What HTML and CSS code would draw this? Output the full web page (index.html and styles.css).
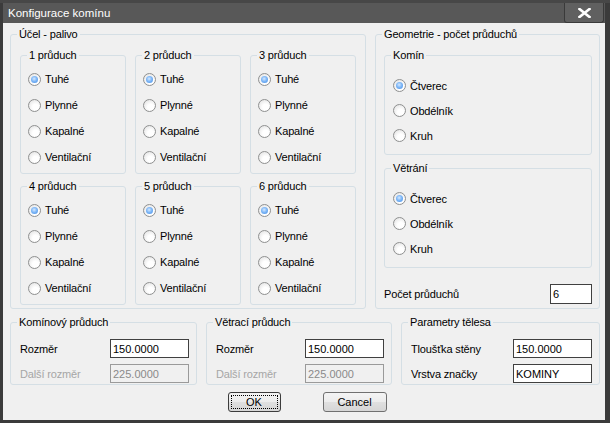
FILE: index.html
```html
<!DOCTYPE html>
<html lang="cs">
<head>
<meta charset="utf-8">
<title>Konfigurace komínu</title>
<link rel="stylesheet" href="styles.css">
</head>
<body>
<div class="window">
  <div class="titlebar">
    <span class="title">Konfigurace komínu</span>
    <button class="close" type="button" aria-label="Zavřít">
      <svg width="13" height="10" viewBox="0 0 13 10"><path d="M1.5 1 L11.5 9 M11.5 1 L1.5 9" stroke="#fff" stroke-width="2.6" stroke-linecap="square"/></svg>
    </button>
  </div>
  <div class="client">
    <div class="top">
      <div class="group ucel">
        <span class="cap">Účel - palivo</span>
        <div class="grid3">
          <div class="group sub"><span class="cap">1 průduch</span>
            <div class="radio-row"><span class="radio on"></span>Tuhé</div>
            <div class="radio-row"><span class="radio"></span>Plynné</div>
            <div class="radio-row"><span class="radio"></span>Kapalné</div>
            <div class="radio-row"><span class="radio"></span>Ventilační</div>
          </div>
          <div class="group sub"><span class="cap">2 průduch</span>
            <div class="radio-row"><span class="radio on"></span>Tuhé</div>
            <div class="radio-row"><span class="radio"></span>Plynné</div>
            <div class="radio-row"><span class="radio"></span>Kapalné</div>
            <div class="radio-row"><span class="radio"></span>Ventilační</div>
          </div>
          <div class="group sub"><span class="cap">3 průduch</span>
            <div class="radio-row"><span class="radio on"></span>Tuhé</div>
            <div class="radio-row"><span class="radio"></span>Plynné</div>
            <div class="radio-row"><span class="radio"></span>Kapalné</div>
            <div class="radio-row"><span class="radio"></span>Ventilační</div>
          </div>
          <div class="group sub"><span class="cap">4 průduch</span>
            <div class="radio-row"><span class="radio on"></span>Tuhé</div>
            <div class="radio-row"><span class="radio"></span>Plynné</div>
            <div class="radio-row"><span class="radio"></span>Kapalné</div>
            <div class="radio-row"><span class="radio"></span>Ventilační</div>
          </div>
          <div class="group sub"><span class="cap">5 průduch</span>
            <div class="radio-row"><span class="radio on"></span>Tuhé</div>
            <div class="radio-row"><span class="radio"></span>Plynné</div>
            <div class="radio-row"><span class="radio"></span>Kapalné</div>
            <div class="radio-row"><span class="radio"></span>Ventilační</div>
          </div>
          <div class="group sub"><span class="cap">6 průduch</span>
            <div class="radio-row"><span class="radio on"></span>Tuhé</div>
            <div class="radio-row"><span class="radio"></span>Plynné</div>
            <div class="radio-row"><span class="radio"></span>Kapalné</div>
            <div class="radio-row"><span class="radio"></span>Ventilační</div>
          </div>
        </div>
      </div>
      <div class="group geo">
        <span class="cap">Geometrie - počet průduchů</span>
        <div class="group shape"><span class="cap">Komín</span>
          <div class="radio-row"><span class="radio on"></span>Čtverec</div>
          <div class="radio-row"><span class="radio"></span>Obdélník</div>
          <div class="radio-row"><span class="radio"></span>Kruh</div>
        </div>
        <div class="group shape"><span class="cap">Větrání</span>
          <div class="radio-row"><span class="radio on"></span>Čtverec</div>
          <div class="radio-row"><span class="radio"></span>Obdélník</div>
          <div class="radio-row"><span class="radio"></span>Kruh</div>
        </div>
        <div class="count">
          <span>Počet průduchů</span>
          <span class="input count-input">6</span>
        </div>
      </div>
    </div>
    <div class="bottom">
      <div class="group dim dim-a"><span class="cap">Komínový průduch</span>
        <div class="field"><span>Rozměr</span><span class="input">150.0000</span></div>
        <div class="field disabled"><span>Další rozměr</span><span class="input">225.0000</span></div>
      </div>
      <div class="group dim dim-b"><span class="cap">Větrací průduch</span>
        <div class="field"><span>Rozměr</span><span class="input">150.0000</span></div>
        <div class="field disabled"><span>Další rozměr</span><span class="input">225.0000</span></div>
      </div>
      <div class="group dim dim-c"><span class="cap">Parametry tělesa</span>
        <div class="field"><span>Tloušťka stěny</span><span class="input">150.0000</span></div>
        <div class="field"><span>Vrstva značky</span><span class="input">KOMINY</span></div>
      </div>
    </div>
    <div class="buttons">
      <button class="btn btn-ok" type="button">OK</button>
      <button class="btn btn-cancel" type="button">Cancel</button>
    </div>
  </div>
</div>
</body>
</html>
```

FILE: styles.css
```css
html, body {
  margin: 0;
  padding: 0;
  background: #3b3b3b;
}
body {
  font-family: "Liberation Sans", Arial, sans-serif;
  font-size: 11px;
  letter-spacing: -0.15px;
  color: #000;
}
.window {
  width: 610px;
  height: 423px;
  box-sizing: border-box;
  background: #3b3b3b;
  border-top: 3px solid #474747;
  padding: 0 5px 3px 3px;
  display: flex;
  flex-direction: column;
}
.titlebar {
  flex: none;
  height: 20px;
  background: #585858;
  display: flex;
  align-items: center;
  justify-content: space-between;
  padding-left: 5px;
}
.title {
  color: #fff;
  font-size: 11.5px;
  letter-spacing: 0;
  line-height: 20px;
}
.close {
  width: 40px;
  height: 20px;
  box-sizing: border-box;
  margin: 0 1px 0 0;
  padding: 0;
  background: #606060;
  border: 1px solid #3a3a3a;
  border-top: 0;
  border-radius: 0 0 3px 3px;
  display: flex;
  align-items: center;
  justify-content: center;
}
.client {
  flex: 1;
  background: #f0f0f0;
  padding: 11px 5px 5px 7px;
  display: flex;
  flex-direction: column;
}
.group {
  position: relative;
  box-sizing: border-box;
  border: 1px solid #d5dfe5;
  border-radius: 3px;
}
.cap {
  position: absolute;
  top: -7px;
  left: 6px;
  padding: 0 2px;
  line-height: 13px;
  background: #f0f0f0;
  white-space: nowrap;
}
.top {
  display: flex;
  gap: 9px;
}
.ucel {
  width: 356px;
  flex: none;
  padding: 20px 9px 3px 9px;
}
.grid3 {
  display: grid;
  grid-template-columns: repeat(3, 106px);
  column-gap: 9px;
  row-gap: 12px;
}
.sub {
  padding: 10px 0 3px 7px;
}
.radio-row {
  display: flex;
  align-items: center;
  height: 26px;
  white-space: nowrap;
}
.radio {
  flex: none;
  width: 13px;
  height: 13px;
  box-sizing: border-box;
  border-radius: 50%;
  border: 1px solid #8f9090;
  background: radial-gradient(circle at 60% 65%, #ffffff 30%, #e9e9e9 75%, #d6d6d6 100%);
  margin-right: 4px;
  display: flex;
  align-items: center;
  justify-content: center;
}
.radio.on::after {
  content: "";
  width: 7px;
  height: 7px;
  border-radius: 50%;
  background: radial-gradient(circle at 45% 40%, #d4e9ff 0%, #7fb7f6 45%, #3f8be6 100%);
}
.geo {
  flex: 1;
  padding: 20px 7px 0 8px;
  display: flex;
  flex-direction: column;
}
.shape {
  padding: 17px 0 6px 8px;
}
.shape + .shape {
  margin-top: 13px;
}
.shape .radio-row {
  height: 25px;
}
.count {
  display: flex;
  justify-content: space-between;
  align-items: center;
  margin-top: 16px;
}
.input {
  box-sizing: border-box;
  height: 19px;
  width: 79px;
  border: 1px solid #404040;
  background: #fff;
  padding: 0 2px;
  display: flex;
  align-items: center;
  letter-spacing: 0;
}
.count-input {
  width: 42px;
  height: 20px;
}
.bottom {
  display: flex;
  gap: 9px;
  margin-top: 13px;
}
.dim {
  padding: 16px 7px 1px 9px;
}
.dim-a { width: 187px; }
.dim-b { width: 186px; }
.dim-c { flex: 1; }
.field {
  display: flex;
  justify-content: space-between;
  align-items: center;
  height: 19px;
}
.field + .field {
  margin-top: 6px;
}
.field.disabled {
  color: #a6a6a6;
}
.field.disabled .input {
  background: #f0f0f0;
  border-color: #9a9a9a;
  color: #8a8a8a;
}
.buttons {
  display: flex;
  justify-content: center;
  gap: 42px;
  margin-top: 7px;
  padding-left: 4px;
}
.btn {
  height: 20px;
  box-sizing: border-box;
  padding: 0;
  border: 1px solid #707070;
  border-radius: 3px;
  background: linear-gradient(#f4f4f4, #ececec 50%, #e0e0e0 50%, #d6d6d6);
  font: inherit;
  letter-spacing: 0;
  color: #000;
}
.btn-ok {
  width: 53px;
  border-color: #3c3c3c;
  outline: 1px dotted #000;
  outline-offset: -4px;
}
.btn-cancel {
  width: 64px;
}
```
